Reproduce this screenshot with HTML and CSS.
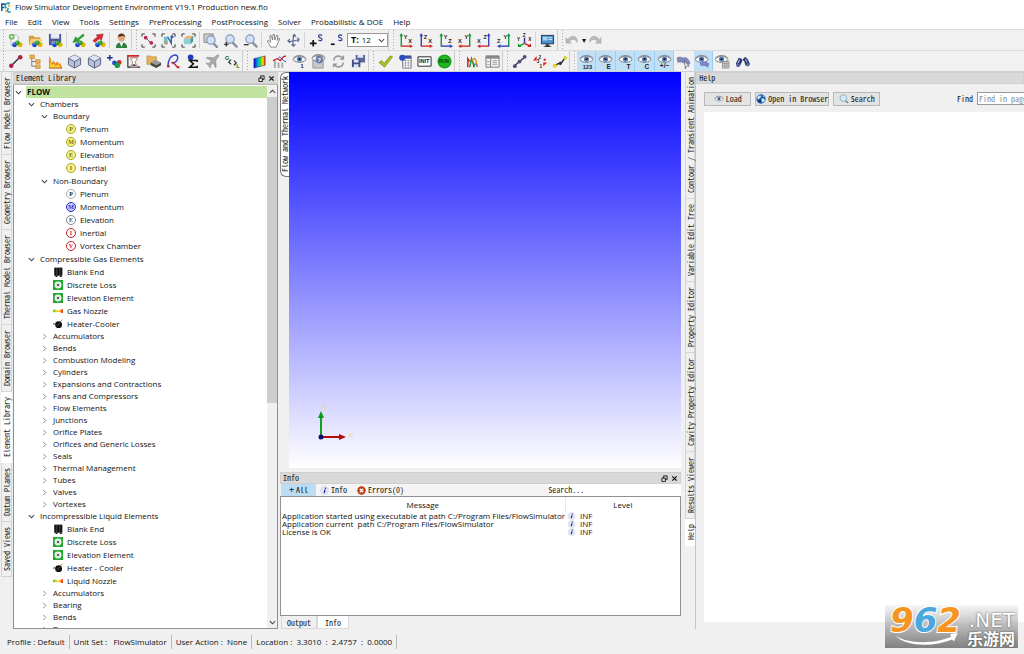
FILE: index.html
```html
<!DOCTYPE html>
<html lang="en">
<head>
<meta charset="utf-8">
<title>Flow Simulator Development Environment</title>
<link rel="stylesheet" href="styles.css">
</head>
<body>
<svg class="defs" aria-hidden="true">
  <defs>
    <linearGradient id="rainbow"><stop offset="0" stop-color="#10c"/><stop offset=".35" stop-color="#0ad"/><stop offset=".6" stop-color="#3d3"/><stop offset=".8" stop-color="#fd0"/><stop offset="1" stop-color="#e20"/></linearGradient>
    <linearGradient id="nozzle"><stop offset="0" stop-color="#7c2"/><stop offset=".5" stop-color="#fd3"/><stop offset="1" stop-color="#e31"/></linearGradient>
  </defs>
  <symbol id="balls" viewBox="0 0 16 16"><circle cx="7" cy="12.500" r="2.600" fill="#1a3fd0"/><circle cx="13" cy="12.500" r="2.600" fill="#e0b400"/><circle cx="10" cy="10.500" r="2.500" fill="#2c9a2c"/><circle cx="6.500" cy="11.500" r=".8" fill="#9bf"/><circle cx="9.500" cy="9.700" r=".7" fill="#bfb"/></symbol>
  <symbol id="i-new" viewBox="0 0 16 16"><path d="M3 2h6l2 2v9H3z" fill="#f4f4f4" stroke="#bbb"/><circle cx="4" cy="4" r="3" fill="#5fae4a"/><path d="M4 2.300v3.400M2.300 4h3.400" stroke="#fff"/><use href="#balls"/></symbol>
  <symbol id="i-open" viewBox="0 0 16 16"><path d="M1 3h5l1 1.500h6V12H1z" fill="#d99b35"/><path d="M3 6h12l-2 7H1z" fill="#f6cf7a"/><use href="#balls"/></symbol>
  <symbol id="i-save" viewBox="0 0 16 16"><path d="M1 1h13v12H1z" fill="#4a5a95"/><path d="M3 1h9v5H3z" fill="#e8ecf6"/><path d="M4 9h7v4H4z" fill="#b9c2dc"/><use href="#balls"/></symbol>
  <symbol id="i-import" viewBox="0 0 16 16"><path d="M13 1 7 6 5 4 2 10l7-1.500L8 7.500 14 3z" fill="#28a52a" stroke="#167018" stroke-width=".5"/><use href="#balls"/></symbol>
  <symbol id="i-export" viewBox="0 0 16 16"><path d="M2 8 7 4 5.500 2 13 1l-2 7-2-2-5 4z" fill="#d92b34" stroke="#8f1a20" stroke-width=".5"/><use href="#balls"/></symbol>
  <symbol id="i-user" viewBox="0 0 16 16"><path d="M2 16c0-5 3-6 6-6s6 1 6 6z" fill="#2f7d3c"/><path d="M6 10h4l-2 5z" fill="#fff"/><circle cx="8" cy="5.500" r="3.500" fill="#e3a878"/><path d="M4 5c0-6 8-6 8 0l-2-2-5 1z" fill="#5a3016"/></symbol>
  <symbol id="frame" viewBox="0 0 16 16"><path d="M1 4V1h3M12 1h3v3M15 12v3h-3M4 15H1v-3" fill="none" stroke="#333"/></symbol>
  <symbol id="i-fit" viewBox="0 0 16 16"><use href="#frame"/><path d="m5 5 6 6" stroke="#a36"/><circle cx="5" cy="5" r="2" fill="#b52360"/><circle cx="11" cy="10.500" r="2" fill="#b52360"/></symbol>
  <symbol id="i-fitm" viewBox="0 0 16 16"><use href="#frame"/><path d="M3 4h4v8H3z" fill="#6fc3c8"/><path d="M7 4l4 7V3" fill="none" stroke="#2a63b8" stroke-width="1.500"/><circle cx="12" cy="4" r="1.500" fill="#2a63b8"/><path d="M4 9h3v3H4z" fill="#d8924a"/></symbol>
  <symbol id="i-fitb" viewBox="0 0 16 16"><use href="#frame"/><path d="M3 6h7v6H3z" fill="#8fd0d6"/><path d="m3 6 3-3h7l-3 3z" fill="#e3b57a"/><path d="m10 6 3-3v6l-3 3z" fill="#4c9b9f"/></symbol>
  <symbol id="lens" viewBox="0 0 16 16"><path d="m10.500 10.500 4 4" stroke="#8890a5" stroke-width="2.500" stroke-linecap="round"/><circle cx="7.500" cy="6.500" r="4.500" fill="#cfe0f7" stroke="#8a94ae" stroke-width="1.200"/></symbol>
  <symbol id="i-zoombox" viewBox="0 0 16 16"><path d="M1 1h10v9H1z" fill="#ccc" stroke="#888"/><use href="#lens" x="1" y="1"/></symbol>
  <symbol id="i-zoomin" viewBox="0 0 16 16"><use href="#lens"/><path d="M1 12h5M3.500 9.500v5" stroke="#222" stroke-width="1.300"/></symbol>
  <symbol id="i-zoomout" viewBox="0 0 16 16"><use href="#lens"/><path d="M1 12.500h5" stroke="#222" stroke-width="1.300"/></symbol>
  <symbol id="i-hand" viewBox="0 0 16 16"><path d="M5 15 1.500 8.500l1.500-.5 2 2L4 3l1.500-.5L7 7.500 7.500 1.500H9l.3 6 2-5 1.500.5-1 5 2-2.500 1 .7L12 12l-1 3z" fill="#fff" stroke="#777" stroke-width=".9" stroke-linejoin="round"/></symbol>
  <symbol id="i-rotate" viewBox="0 0 16 16"><path d="M9 2c-2 4-2 8-1 12M2 8.500c4 1 8 0 12-1.500M7 3.500 9 1.500l1.500 2.500M4 6.500 2 8.500l2.500 2M12 5l2 2-1.500 2.500M6 12l2 2 2-2" fill="none" stroke="#5b6690" stroke-width="1.200"/></symbol>
  <symbol id="i-splus" viewBox="0 0 16 16"><path d="M1 11h7M4.500 7.500v7" stroke="#111" stroke-width="1.800"/><path d="M14 2.500c-4-2-5 2-2 2.600 3 .8 2 4.500-2 2.400" fill="none" stroke="#2b3a98" stroke-width="1.300"/></symbol>
  <symbol id="i-sminus" viewBox="0 0 16 16"><path d="M2 12h4" stroke="#111" stroke-width="1.800"/><path d="M14 2.500c-4-2-5 2-2 2.600 3 .8 2 4.500-2 2.400" fill="none" stroke="#2b3a98" stroke-width="1.300"/></symbol>
  <symbol id="ax-l" viewBox="0 0 16 16"><path d="M3.500 2v12" stroke="currentColor" stroke-width="1.500"/><path d="m3.500 0 2 3.500h-4z" fill="currentColor"/></symbol>
  <symbol id="ax-r" viewBox="0 0 16 16"><path d="M12.500 2v12" stroke="currentColor" stroke-width="1.500"/><path d="m12.500 0 2 3.500h-4z" fill="currentColor"/></symbol>
  <symbol id="ay-l" viewBox="0 0 16 16"><path d="M3 14h10" stroke="currentColor" stroke-width="1.500"/><path d="m16 14-3.500-2v4z" fill="currentColor"/></symbol>
  <symbol id="ay-r" viewBox="0 0 16 16"><path d="M3 14h10" stroke="currentColor" stroke-width="1.500"/><path d="m0 14 3.500-2v4z" fill="currentColor"/></symbol>
  <symbol id="i-iso" viewBox="0 0 16 16"><path d="M8 5v6" stroke="#33a" stroke-width="1.600"/><path d="m8 11-6 3" stroke="#1c9a35" stroke-width="1.600"/><path d="m8 11 6 3" stroke="#c22" stroke-width="1.600"/><path d="M1 11v4h4z" fill="#1c9a35"/><path d="M15 11v4h-4z" fill="#c22"/></symbol>
  <symbol id="i-screen" viewBox="0 0 16 16"><path d="M1 2h14v10H1z" fill="#2e3f55"/><path d="M2 3h12v8H2z" fill="#4b93cf"/><path d="M3 4h5v4H3z" fill="#a9d3f2"/><path d="M9 5h4M9 7h4" stroke="#d6ecff"/><path d="M6 12h4v2h2v1H4v-1h2z" fill="#333"/></symbol>
  <symbol id="i-undo" viewBox="0 0 16 16"><path d="M1 5v6h6L5 9c2-3 6-3 8 1 1-7-6-9-10-3z" fill="#b9b9b9" stroke="#999" stroke-width=".4"/></symbol>
  <symbol id="i-redo" viewBox="0 0 16 16"><path d="M15 5v6H9l2-2c-2-3-6-3-8 1-1-7 6-9 10-3z" fill="#b9b9b9" stroke="#999" stroke-width=".4"/></symbol>

  <symbol id="i-link" viewBox="0 0 16 16"><path d="m3 13 10-10" stroke="#333" stroke-width="1.500"/><circle cx="3.500" cy="12.500" r="2.400" fill="#b01f45"/><circle cx="13" cy="3.500" r="2.400" fill="#b01f45"/></symbol>
  <symbol id="i-tree" viewBox="0 0 16 16"><path d="M4 4v9h5M4 8h5" fill="none" stroke="#777"/><path d="M2 1h5v4H2zM8 6h5v4H8zM8 11.500h5v4H8z" fill="#e9ae4d" stroke="#b97f2b" stroke-width=".5"/></symbol>
  <symbol id="i-flame" viewBox="0 0 16 16"><path d="M1 15V2l2 3 1 5 2-3 2 3 2-2 2 3 1-2 2 6z" fill="#f08a1c"/><path d="M2 15V8l2 4 2-2 2 3 3-2 3 4z" fill="#ffd23c"/><path d="M1 15h14" stroke="#b44b0a"/></symbol>
  <symbol id="i-cube" viewBox="0 0 16 16"><path d="m8 1 6.500 3.500v7L8 15l-6.500-3.500v-7z" fill="#b9c0dc" stroke="#59607f"/><path d="M8 1l6.500 3.500L8 8 1.500 4.500z" fill="#e1e5f3"/><path d="M1.500 4.500 8 8l6.500-3.500M8 8v7" fill="none" stroke="#59607f"/></symbol>
  <symbol id="i-addballs" viewBox="0 0 16 16"><path d="M0 4h6M3 1v6" stroke="#1f2c9c" stroke-width="1.500"/><circle cx="8" cy="9.500" r="2.600" fill="#2047cc"/><circle cx="13" cy="9" r="2.500" fill="#c72a2a"/><circle cx="11" cy="12" r="3" fill="#1c9c3c"/></symbol>
  <symbol id="i-hour" viewBox="0 0 16 16"><path d="M2 1v13h13" fill="none" stroke="#222" stroke-width="1.200"/><path d="M2 2h12" stroke="#c22" stroke-width="1.800"/><path d="M5 4h7c0 3-2 3-2 5s2 2 2 5H5c0-3 2-3 2-5S5 7 5 4z" fill="#fff" stroke="#966"/><path d="M6 13c1-3 4-3 5 0z" fill="#555"/></symbol>
  <symbol id="i-block" viewBox="0 0 16 16"><path d="M1 2h4l1 1h5v8H1z" fill="#e7b35a" stroke="#a4701c" stroke-width=".5"/><path d="m5 9 5-3 6 3-5 3z" fill="#999"/><path d="m5 9 6 3v3l-6-3zM16 9l-5 3v3l5-3z" fill="#444"/></symbol>
  <symbol id="i-curve" viewBox="0 0 16 16"><path d="M2 13C3-2 15-1 12 6c-1 3-4 4-6 3" fill="none" stroke="#2c3fd0" stroke-width="1.500"/><path d="M6 9c3 1 5 3 6 5" fill="none" stroke="#c22" stroke-width="1.500"/><circle cx="2.500" cy="13" r="1.300" fill="#c22"/><circle cx="13" cy="14" r="1.300" fill="#c22"/></symbol>
  <symbol id="i-sigma" viewBox="0 0 16 16"><circle cx="6" cy="3.500" r="3" fill="#1f39b8"/><path d="M13 8.500V7H5l4 3.500L5 14h8v-1.500" fill="none" stroke="#111" stroke-width="1.600"/></symbol>
  <symbol id="i-plane" viewBox="0 0 16 16"><path d="M14.500 1c-2-.5-4 2-5 3L2 3.500 1.500 4.500 7 7l-3 3-2.500-.5v.8l2.200 1.700 1.300 2.500h.8L6.300 12 9 9.500l2 5 1-.7-.5-7.300c1.500-1.500 3.500-4 3-5.500z" fill="#aaa" stroke="#666" stroke-width=".4"/></symbol>
  <symbol id="i-code" viewBox="0 0 16 16"><path d="M6.500 6 4 8.500 6.500 11M9.500 7l2.500 2.500L9.500 12" fill="none" stroke="#222" stroke-width="1.200"/></symbol>
  <symbol id="i-contour" viewBox="0 0 16 16"><path d="m2 5 12-3v10L2 15z" fill="url(#rainbow)" stroke="#118" stroke-width=".5"/></symbol>
  <symbol id="i-chart" viewBox="0 0 16 16"><path d="M2 7h2v8H2zM6 9h2v6H6zM10 9h2v6h-2z" fill="#aaa"/><path d="m1 7 5-2 3 2 3-4 3-1" fill="none" stroke="#c22" stroke-width="1.300"/><path d="M7 4c2-3 4 4 8 4" fill="none" stroke="#23c"/></symbol>
  <symbol id="eye" viewBox="0 0 16 16"><path d="M1 6c4-5 10-5 14 0-4 4-10 4-14 0z" fill="#fff" stroke="#777"/><path d="M1 4.500c4-4 10-4 14 0" fill="none" stroke="#888"/><circle cx="8" cy="5.500" r="2.800" fill="#5d83b8"/><circle cx="8" cy="5.500" r="1.200" fill="#152238"/></symbol>
  <symbol id="i-eyeq" viewBox="0 0 16 16"><path d="M2 7h11v8H2z" fill="#c9c9c9" stroke="#999"/><use href="#eye" y="-1"/><circle cx="9" cy="6" r="4" fill="#6e7ea8"/></symbol>
  <symbol id="i-refresh" viewBox="0 0 16 16"><path d="M3 7c0-5 6-6 9-3M13 9c0 5-6 6-9 3" fill="none" stroke="#999" stroke-width="1.600"/><path d="M14 1v5H9zM2 15v-5h5z" fill="#999"/></symbol>
  <symbol id="i-saves" viewBox="0 0 16 16"><path d="M5 1h10v8H5z" fill="#5b679f"/><path d="M7 1h6v3H7z" fill="#e3e6f4"/><path d="M1 6h9v8H1z" fill="#414d88"/><path d="M3 6h5v3H3zM3 11h5v3H3z" fill="#dfe3f2"/></symbol>
  <symbol id="i-check" viewBox="0 0 16 16"><path d="m1 9 3-2 2.500 3L13 2l2.500 1L7 14z" fill="#a5c520" stroke="#6f8a10" stroke-width=".7"/></symbol>
  <symbol id="i-table" viewBox="0 0 16 16"><path d="M5 2h9v13H5z" fill="#fff" stroke="#556" stroke-width=".8"/><path d="M5 7h9M5 9.500h9M5 12h9M8 6v9M11 6v9" stroke="#889" stroke-width=".6"/><path d="M5 2h9v3H5z" fill="#3f4f98"/><circle cx="4.500" cy="4" r="3.200" fill="#2c4cc0"/></symbol>
  <symbol id="i-box" viewBox="0 0 16 16"><path d="M1 3h14v10H1z" fill="#fff" stroke="#222"/></symbol>
  <symbol id="i-disc" viewBox="0 0 16 16"><circle cx="8" cy="8" r="7.500" fill="#22b822"/><circle cx="8" cy="8" r="6.500" fill="none" stroke="#0c7f12" stroke-width=".6"/></symbol>
  <symbol id="i-peaks" viewBox="0 0 16 16"><path d="M3 14V5l2 3" fill="none" stroke="#c22" stroke-width="1.600"/><path d="M5 14 7 5l3 9" fill="none" stroke="#2c8d2c" stroke-width="1.600"/><path d="M8 7c3-6 4 1 5 7" fill="none" stroke="#e29b1c" stroke-width="1.600"/><path d="M9 14c0-4 2-5 4-1" fill="none" stroke="#33b"/></symbol>
  <symbol id="i-panel" viewBox="0 0 16 16"><path d="M1 2h14v12H1z" fill="#f5f5f5" stroke="#777"/><path d="M1 2h14v3H1z" fill="#888"/><path d="M6 5v9" stroke="#777"/><path d="M2 8h3M2 11h3M8 7h5M8 9h5M8 11h5" stroke="#999"/></symbol>
  <symbol id="i-node" viewBox="0 0 16 16"><path d="M2 13 14 3" stroke="#333" stroke-width="1.400"/><circle cx="3" cy="13" r="2" fill="#4c4c80"/><circle cx="8" cy="8" r="2" fill="#4c4c80"/><circle cx="13.500" cy="3" r="2" fill="#4c4c80"/></symbol>
  <symbol id="i-num" viewBox="0 0 16 16"><path d="M1 7 5 2v5zM12 9h4l-4 4z" fill="#d22"/><circle cx="13.500" cy="6" r="1.300" fill="#d22"/></symbol>
  <symbol id="i-ynode" viewBox="0 0 16 16"><path d="m2 13 5-3 2 1 5-7" fill="none" stroke="#222" stroke-width="1.400"/><circle cx="3" cy="12.500" r="2.200" fill="#d8d81c"/><circle cx="9" cy="9.500" r="1.600" fill="#333"/><circle cx="14" cy="4" r="2" fill="#d8d81c"/></symbol>
  <symbol id="i-surf" viewBox="0 0 16 16"><path d="M1 4c5-2 6 1 8 0s5 2 6 6l-4 3c-1-4-6-5-9-4z" fill="#8087c0" stroke="#62689c" stroke-width=".5"/><path d="m9 7 5 6h-3l-1 3z" fill="#eee" stroke="#444" stroke-width=".6"/></symbol>
  <symbol id="i-eyesurf" viewBox="0 0 16 16"><use href="#eye" x="-1"/><path d="M5 9c4-2 8-1 10 1l-1 5c-2-2-5-3-8-2z" fill="#7d84c4"/></symbol>
  <symbol id="i-eyegrid" viewBox="0 0 16 16"><use href="#eye" x="-1"/><path d="M8 8h7v7H8z" fill="#ddd" stroke="#777" stroke-width=".7"/><path d="M10.300 8v7M12.600 8v7M8 10.300h7M8 12.600h7" stroke="#777" stroke-width=".6"/></symbol>
  <symbol id="i-bino" viewBox="0 0 16 16"><path d="m1 10 3-6 3 1 1 2-3 6-2 1zM8 6l3-3 3 3 2 5-2 2-3-1-1-4z" fill="#26346f"/><path d="m3 10 2-4M11 5l2 4" stroke="#a3afe0" stroke-width="1.200"/><circle cx="13.500" cy="11.500" r="1.800" fill="#5867a8"/><circle cx="3" cy="12" r="1.800" fill="#5867a8"/></symbol>

  <symbol id="i-blank" viewBox="0 0 16 16"><path d="M2 1h13v13H2z" fill="#111"/><path d="M6 1v13M11 1v13" stroke="#777" stroke-width=".8"/><path d="M4 14h3v2H4zM11 14h3v2h-3z" fill="#111"/></symbol>
  <symbol id="i-loss" viewBox="0 0 16 16"><path d="M0 0h16v16H0z" fill="#25a832"/><circle cx="8" cy="8" r="5.500" fill="#fff"/><circle cx="8" cy="8" r="3.400" fill="none" stroke="#9ad6a0"/><circle cx="8" cy="8" r="1.600" fill="#222"/></symbol>
  <symbol id="i-nozzle" viewBox="0 0 16 16"><path d="M0 5.500h4l3 1.500h4l2-2h3v6h-3l-2-1.500H7L4 10H0z" fill="url(#nozzle)"/></symbol>
  <symbol id="i-heater" viewBox="0 0 16 16"><path d="M0 8h5" stroke="#222" stroke-width="1.300"/><path d="m11 5 4-4" stroke="#d83" stroke-width="1.500"/><circle cx="9" cy="9" r="5.500" fill="#111"/><path d="m6 11 6-5" stroke="#875"/></symbol>
  <symbol id="i-down" viewBox="0 0 8 8"><path d="m1 2.500 3 3 3-3" fill="none" stroke="#444" stroke-width="1.200"/></symbol>
  <symbol id="i-up" viewBox="0 0 8 8"><path d="m1 5.500 3-3 3 3" fill="none" stroke="#444" stroke-width="1.200"/></symbol>
  <symbol id="i-right" viewBox="0 0 8 8"><path d="m2.500 1 3 3-3 3" fill="none" stroke="#888" stroke-width="1.100"/></symbol>
  <symbol id="i-float" viewBox="0 0 8 8"><path d="M3 1h4v4H3z" fill="none" stroke="#111"/><path d="M1 3.500h4v4H1z" fill="#ddd" stroke="#111"/></symbol>
  <symbol id="i-close" viewBox="0 0 8 8"><path d="m1.500 1.500 5 5M6.500 1.500l-5 5" stroke="#111" stroke-width="1.400"/></symbol>
  <symbol id="i-info" viewBox="0 0 16 16"><circle cx="8" cy="8" r="7" fill="#e4e6f4" stroke="#d0d2de"/><path d="M10 3 9.600 5M9 6.500l-1.600 6" stroke="#2330b0" stroke-width="2.400"/></symbol>
  <symbol id="i-err" viewBox="0 0 16 16"><circle cx="8" cy="8" r="7.500" fill="#c23a10"/><path d="m5 5 6 6M11 5l-6 6" stroke="#fff" stroke-width="2.400"/></symbol>
  <symbol id="i-globe" viewBox="0 0 16 16"><circle cx="8" cy="8" r="7.500" fill="#1d62b8"/><path d="M2 5c3-4 6-3 6-1S5 6 5 8 2 8 2 5zM9 8c3-2 5 0 5 2s-3 4-4 3-2-4-1-5zM11 2l3 3-3-1z" fill="#d8e8f4"/><circle cx="6" cy="11" r="2.500" fill="#0c2f7a"/></symbol>
  <symbol id="i-find" viewBox="0 0 16 16"><path d="m10 10 4.500 4.500" stroke="#68a" stroke-width="2.500"/><circle cx="7" cy="6.500" r="5.500" fill="#cfe7f8" stroke="#79a"/></symbol>
</svg>

<header class="titlebar">
  <svg class="logo" viewBox="0 0 16 16" aria-hidden="true"><path d="M6 3H1v10M1 8h4" fill="none" stroke="#245c8c" stroke-width="2.500"/><path d="M13 2c-6-2-9 4-5 7M14 14c-5 2-6-2-3-5" fill="none" stroke="#2a9bc8" stroke-width="2.500"/><path d="m10 3 4 2-3 3zM7 11l3 3-4 1z" fill="#f0a020"/></svg>
  <span>Flow Simulator Development Environment V19.1 Production new.flo</span>
</header>
<nav class="menubar" aria-label="Main menu">
  <button>File</button><button>Edit</button><button>View</button><button>Tools</button><button>Settings</button><button>PreProcessing</button><button>PostProcessing</button><button>Solver</button><button>Probabilistic &amp; DOE</button><button>Help</button>
</nav>

<div class="toolbar">
  <i class="grip first"></i>
  <div class="group g3"><button aria-label="New"><svg><use href="#i-new"/></svg></button><button aria-label="Open"><svg><use href="#i-open"/></svg></button><button aria-label="Save"><svg><use href="#i-save"/></svg></button></div><i class="sep"></i>
  <div class="group g2"><button aria-label="Import"><svg><use href="#i-import"/></svg></button><button aria-label="Export"><svg><use href="#i-export"/></svg></button></div><i class="sep"></i>
  <div class="group g1"><button aria-label="User"><svg><use href="#i-user"/></svg></button></div>
  <i class="grip"></i>
  <div class="group g3"><button aria-label="Fit network"><svg><use href="#i-fit"/></svg></button><button aria-label="Fit model"><svg><use href="#i-fitm"/></svg></button><button aria-label="Fit geometry"><svg><use href="#i-fitb"/></svg></button></div><i class="sep"></i>
  <div class="group g3"><button aria-label="Zoom window"><svg><use href="#i-zoombox"/></svg></button><button aria-label="Zoom in"><svg><use href="#i-zoomin"/></svg></button><button aria-label="Zoom out"><svg><use href="#i-zoomout"/></svg></button></div><i class="sep"></i>
  <div class="group g2"><button aria-label="Pan"><svg><use href="#i-hand"/></svg></button><button aria-label="Rotate"><svg><use href="#i-rotate"/></svg></button></div><i class="sep"></i>
  <div class="group g2"><button aria-label="Larger symbols"><svg><use href="#i-splus"/></svg></button><button aria-label="Smaller symbols"><svg><use href="#i-sminus"/></svg></button></div>
  <label class="sizer"><b>T:</b><select aria-label="Text size"><option>12</option></select><svg><use href="#i-down"/></svg></label>
  <i class="grip"></i>
  <div class="group g7">
    <button aria-label="XY view"><svg viewBox="0 0 16 16"><use href="#ax-l" class="green"/><use href="#ay-l" class="red"/><text x="6" y="6" class="t6">Y</text><text x="11" y="11" class="t6">X</text></svg></button>
    <button aria-label="XZ view"><svg viewBox="0 0 16 16"><use href="#ax-l" class="blue"/><use href="#ay-l" class="red"/><text x="6" y="6" class="t6">Z</text><text x="11" y="11" class="t6">X</text></svg></button>
    <button aria-label="ZY view"><svg viewBox="0 0 16 16"><use href="#ax-l" class="green"/><use href="#ay-l" class="blue"/><text x="6" y="6" class="t6">Y</text><text x="11" y="11" class="t6">Z</text></svg></button>
    <button aria-label="Reverse XY view"><svg viewBox="0 0 16 16"><use href="#ax-r" class="green"/><use href="#ay-r" class="red"/><text x="7" y="6" class="t6">Y</text><text x="0" y="11" class="t6">X</text></svg></button>
    <button aria-label="Reverse XZ view"><svg viewBox="0 0 16 16"><use href="#ax-r" class="blue"/><use href="#ay-r" class="red"/><text x="7" y="6" class="t6">Z</text><text x="0" y="11" class="t6">X</text></svg></button>
    <button aria-label="Reverse ZY view"><svg viewBox="0 0 16 16"><use href="#ax-r" class="green"/><use href="#ay-r" class="blue"/><text x="7" y="6" class="t6">Y</text><text x="0" y="11" class="t6">Z</text></svg></button>
    <button aria-label="Isometric view"><svg viewBox="0 0 16 16"><use href="#i-iso"/><text x="6" y="4" class="t5">Z</text><text x="0" y="8" class="t5">Y</text><text x="12" y="8" class="t5">X</text></svg></button>
  </div><i class="sep"></i>
  <div class="group g1"><button aria-label="Screen"><svg><use href="#i-screen"/></svg></button></div>
  <i class="grip"></i>
  <div class="group"><button aria-label="Undo"><svg><use href="#i-undo"/></svg></button><button class="caret" aria-label="Undo history">▾</button><button aria-label="Redo"><svg><use href="#i-redo"/></svg></button></div>
</div>

<div class="toolbar">
  <i class="grip first"></i>
  <div class="group g12"><button aria-label="Link"><svg><use href="#i-link"/></svg></button><button aria-label="Hierarchy"><svg><use href="#i-tree"/></svg></button><button aria-label="Thermal"><svg><use href="#i-flame"/></svg></button><button aria-label="Cube"><svg><use href="#i-cube"/></svg></button><button aria-label="Solid"><svg><use href="#i-cube"/></svg></button><button aria-label="Add chamber"><svg><use href="#i-addballs"/></svg></button><button aria-label="Transient"><svg><use href="#i-hour"/></svg></button><button aria-label="Assembly"><svg><use href="#i-block"/></svg></button><button aria-label="Curves"><svg><use href="#i-curve"/></svg></button><button aria-label="Sum"><svg><use href="#i-sigma"/></svg></button><button aria-label="Mission"><svg><use href="#i-plane"/></svg></button><button aria-label="Gas to liquid"><svg viewBox="0 0 16 16"><use href="#i-code"/><text x="0" y="6" class="t6 green">G</text><text x="12" y="15" class="t6 green">L</text></svg></button></div>
  <i class="grip"></i>
  <div class="group g6"><button aria-label="Contour"><svg><use href="#i-contour"/></svg></button><button aria-label="Charts"><svg><use href="#i-chart"/></svg></button><button aria-label="Show one"><svg viewBox="0 0 16 16"><use href="#eye"/><text x="9" y="15" class="t6">1</text></svg></button><button aria-label="Query"><svg viewBox="0 0 16 16"><use href="#i-eyeq"/><text x="7" y="8" class="t6 white">?</text></svg></button><button aria-label="Refresh"><svg><use href="#i-refresh"/></svg></button><button aria-label="Save views"><svg><use href="#i-saves"/></svg></button></div>
  <i class="grip"></i>
  <div class="group g4"><button aria-label="Check"><svg><use href="#i-check"/></svg></button><button aria-label="Table"><svg><use href="#i-table"/></svg></button><button aria-label="Initialise"><svg viewBox="0 0 16 16"><use href="#i-box"/><text x="2" y="10" class="t6">INIT</text></svg></button><button aria-label="Run"><svg viewBox="0 0 16 16"><use href="#i-disc"/><text x="2" y="10" class="t5 dark">RUN</text></svg></button></div>
  <i class="grip"></i>
  <div class="group g2"><button aria-label="Plot"><svg><use href="#i-peaks"/></svg></button><button aria-label="Panel"><svg><use href="#i-panel"/></svg></button></div>
  <i class="grip"></i>
  <div class="group g3"><button aria-label="Nodes"><svg><use href="#i-node"/></svg></button><button aria-label="Renumber"><svg viewBox="0 0 16 16"><use href="#i-num"/><text x="7" y="5" class="t5">2</text><text x="5" y="10" class="t5">3</text><text x="8" y="15" class="t5">1</text></svg></button><button aria-label="Elements"><svg><use href="#i-ynode"/></svg></button></div>
  <i class="grip"></i>
  <div class="group g9">
    <button class="on" aria-label="Show numbers"><svg viewBox="0 0 16 16"><use href="#eye"/><text x="4" y="16" class="t6">123</text></svg></button>
    <button class="on" aria-label="Show elements"><svg viewBox="0 0 16 16"><use href="#eye"/><text x="9" y="16" class="t7">E</text></svg></button>
    <button class="on" aria-label="Show thermal"><svg viewBox="0 0 16 16"><use href="#eye"/><text x="9" y="16" class="t7">T</text></svg></button>
    <button class="on" aria-label="Show chambers"><svg viewBox="0 0 16 16"><use href="#eye"/><text x="8" y="16" class="t7">C</text></svg></button>
    <button class="on" aria-label="Show signs"><svg viewBox="0 0 16 16"><use href="#eye"/><text x="3" y="15" class="t7">+/−</text></svg></button>
    <button aria-label="Select surface"><svg><use href="#i-surf"/></svg></button><button class="on" aria-label="Show surface"><svg><use href="#i-eyesurf"/></svg></button><button aria-label="Show grid"><svg><use href="#i-eyegrid"/></svg></button><button aria-label="Find"><svg><use href="#i-bino"/></svg></button>
  </div>
</div>

<main class="work">
  <div class="vtabs left">
    <button>Flow Model Browser</button><button>Geometry Browser</button><button>Thermal Model Browser</button><button>Domain Browser</button><button class="active">Element Library</button><button>Datum Planes</button><button>Saved Views</button>
  </div>

  <section class="library">
    <h2 class="dockhead"><span>Element Library</span><button aria-label="Float"><svg><use href="#i-float"/></svg></button><button aria-label="Close"><svg><use href="#i-close"/></svg></button></h2>
    <div class="treebox">
      <ul class="tree">
        <li><div class="row root"><svg class="tg"><use href="#i-down"/></svg><b>FLOW</b></div>
        <ul>
          <li><div class="row"><svg class="tg"><use href="#i-down"/></svg>Chambers</div>
          <ul>
            <li><div class="row"><svg class="tg"><use href="#i-down"/></svg>Boundary</div>
              <ul class="leaves inner">
                <li class="row"><i class="badge yel">P</i>Plenum</li><li class="row"><i class="badge yel">M</i>Momentum</li><li class="row"><i class="badge yel">E</i>Elevation</li><li class="row"><i class="badge yel">I</i>Inertial</li>
              </ul></li>
            <li><div class="row"><svg class="tg"><use href="#i-down"/></svg>Non-Boundary</div>
              <ul class="leaves inner">
                <li class="row"><i class="badge blk">P</i>Plenum</li><li class="row"><i class="badge blu">M</i>Momentum</li><li class="row"><i class="badge gry">E</i>Elevation</li><li class="row"><i class="badge rd">I</i>Inertial</li><li class="row"><i class="badge rd">V</i>Vortex Chamber</li>
              </ul></li>
          </ul></li>
          <li><div class="row"><svg class="tg"><use href="#i-down"/></svg>Compressible Gas Elements</div>
            <ul class="leaves">
              <li class="row"><svg class="pic"><use href="#i-blank"/></svg>Blank End</li><li class="row"><svg class="pic"><use href="#i-loss"/></svg>Discrete Loss</li><li class="row"><svg class="pic"><use href="#i-loss"/></svg>Elevation Element</li><li class="row"><svg class="pic"><use href="#i-nozzle"/></svg>Gas Nozzle</li><li class="row"><svg class="pic"><use href="#i-heater"/></svg>Heater-Cooler</li>
            </ul>
            <ul>
              <li class="row"><svg class="tg"><use href="#i-right"/></svg>Accumulators</li><li class="row"><svg class="tg"><use href="#i-right"/></svg>Bends</li><li class="row"><svg class="tg"><use href="#i-right"/></svg>Combustion Modeling</li><li class="row"><svg class="tg"><use href="#i-right"/></svg>Cylinders</li><li class="row"><svg class="tg"><use href="#i-right"/></svg>Expansions and Contractions</li><li class="row"><svg class="tg"><use href="#i-right"/></svg>Fans and Compressors</li><li class="row"><svg class="tg"><use href="#i-right"/></svg>Flow Elements</li><li class="row"><svg class="tg"><use href="#i-right"/></svg>Junctions</li><li class="row"><svg class="tg"><use href="#i-right"/></svg>Orifice Plates</li><li class="row"><svg class="tg"><use href="#i-right"/></svg>Orifices and Generic Losses</li><li class="row"><svg class="tg"><use href="#i-right"/></svg>Seals</li><li class="row"><svg class="tg"><use href="#i-right"/></svg>Thermal Management</li><li class="row"><svg class="tg"><use href="#i-right"/></svg>Tubes</li><li class="row"><svg class="tg"><use href="#i-right"/></svg>Valves</li><li class="row"><svg class="tg"><use href="#i-right"/></svg>Vortexes</li>
            </ul></li>
          <li><div class="row"><svg class="tg"><use href="#i-down"/></svg>Incompressible Liquid Elements</div>
            <ul class="leaves">
              <li class="row"><svg class="pic"><use href="#i-blank"/></svg>Blank End</li><li class="row"><svg class="pic"><use href="#i-loss"/></svg>Discrete Loss</li><li class="row"><svg class="pic"><use href="#i-loss"/></svg>Elevation Element</li><li class="row"><svg class="pic"><use href="#i-heater"/></svg>Heater - Cooler</li><li class="row"><svg class="pic"><use href="#i-nozzle"/></svg>Liquid Nozzle</li>
            </ul>
            <ul>
              <li class="row"><svg class="tg"><use href="#i-right"/></svg>Accumulators</li><li class="row"><svg class="tg"><use href="#i-right"/></svg>Bearing</li><li class="row"><svg class="tg"><use href="#i-right"/></svg>Bends</li><li class="row"><svg class="tg"><use href="#i-right"/></svg>Bosses</li>
            </ul></li>
        </ul></li>
      </ul>
      <div class="scroll"><button aria-label="Scroll up"><svg><use href="#i-up"/></svg></button><div class="track"><div class="thumb"></div></div><button aria-label="Scroll down"><svg><use href="#i-down"/></svg></button></div>
    </div>
  </section>

  <section class="center">
    <div class="stage">
      <div class="scenetab"><button>Flow and Thermal Network</button></div>
      <div class="canvas">
        <svg class="axes" viewBox="0 0 40 40" aria-label="Axes"><path d="M6 34V14" stroke="#10a020" stroke-width="2"/><path d="m6 8 3 7H3z" fill="#0b9a1b"/><path d="M6 34h18" stroke="#b00c0c" stroke-width="2"/><path d="m31 34-7-3v6z" fill="#b00c0c"/><circle cx="6" cy="34" r="2.500" fill="#0b0b78"/><text x="7" y="7" class="axt">Y</text><text x="33" y="35" class="axt">X</text></svg>
      </div>
    </div>
    <section class="info">
      <h2 class="dockhead"><span>Info</span><button aria-label="Float"><svg><use href="#i-float"/></svg></button><button aria-label="Close"><svg><use href="#i-close"/></svg></button></h2>
      <div class="filters"><button class="on"><b class="plus">+</b>All</button><button><svg><use href="#i-info"/></svg>Info</button><button><svg><use href="#i-err"/></svg>Errors(0)</button><input type="text" placeholder="Search..." aria-label="Search messages"></div>
      <div class="log">
        <table>
          <thead><tr><th class="msg">Message</th><th>Level</th></tr></thead>
          <tbody>
            <tr><td>Application started using executable at path C:/Program Files/FlowSimulator</td><td class="lvl"><svg><use href="#i-info"/></svg>INF</td></tr>
            <tr><td>Application current&nbsp; path C:/Program Files/FlowSimulator</td><td class="lvl"><svg><use href="#i-info"/></svg>INF</td></tr>
            <tr><td>License is OK</td><td class="lvl"><svg><use href="#i-info"/></svg>INF</td></tr>
          </tbody>
        </table>
      </div>
      <div class="btabs"><button>Output</button><button class="active">Info</button></div>
    </section>
  </section>

  <div class="vtabs right">
    <button>Contour / Transient Animation</button><button>Variable Edit Tree</button><button>Property Editor</button><button>Cavity Property Editor</button><button>Results Viewer</button><button class="active">Help</button>
  </div>

  <section class="help">
    <h2 class="dockhead"><span>Help</span></h2>
    <div class="helpbar">
      <button><svg viewBox="0 -2 16 16"><use href="#eye"/></svg>Load</button><button><svg><use href="#i-globe"/></svg>Open in Browser</button><button><svg><use href="#i-find"/></svg>Search</button>
      <label for="find">Find</label><input id="find" type="text" placeholder="Find in page">
    </div>
    <div class="page"></div>
  </section>
</main>

<footer class="status"><span>Profile : Default</span><span>Unit Set :&nbsp;&nbsp; FlowSimulator</span><span>User Action :&nbsp; None</span><span>Location :&nbsp; 3.3010&nbsp; :&nbsp; 2.4757&nbsp; :&nbsp; 0.0000</span></footer>

<div class="mark">
  <div class="digits"><span class="or">9</span><span class="bl">6</span><span class="or">2</span></div>
  <div class="names"><span class="net">.NET</span><span class="cn">乐游网</span></div>
  <svg viewBox="0 0 70 14" aria-hidden="true"><path d="M1 3c14 9 42 9 60 1l-1-3 8-1-4 9-2-2C40 16 12 14 1 3z" fill="#fff"/></svg>
</div>
</body>
</html>
```
FILE: styles.css
```css
* { box-sizing: border-box; }
html { height: 100%; }
body {
  --ui: "Open Sans", "Noto Sans", sans-serif;
  --mono: "Noto Sans Mono CJK SC", "Liberation Mono", monospace;
  display: flex; flex-direction: column; height: 100%; margin: 0; overflow: hidden;
  background: #f0f0f0; color: #111; font: 8px/12px var(--ui);
}
button, input, select { margin: 0; padding: 0; border: 0; border-radius: 0; background: none; color: inherit; font: inherit; white-space: nowrap; }
ul { list-style: none; margin: 0; padding: 0; }
svg { display: block; flex: none; }
.defs { position: absolute; width: 0; height: 0; }
.t5, .t6, .t7 { font-family: "Liberation Sans", sans-serif; font-weight: bold; fill: #222; }
.t5 { font-size: 5px; }
.t6 { font-size: 6px; }
.t7 { font-size: 7px; }
text.green { fill: #176b25; }
text.white { fill: #fff; }
text.dark { fill: #043a08; }
use.green { color: #12993a; }
use.red { color: #cc3333; }
use.blue { color: #3344bb; }

.titlebar { display: flex; align-items: center; gap: 3px; height: 14px; padding-left: 1px; background: #fff; }
.logo { width: 11px; height: 11px; }
.menubar { display: flex; gap: 10px; height: 15px; padding-left: 5px; background: #fff; }
.menubar button { line-height: 15px; }

.toolbar { display: flex; align-items: center; height: 21px; border-top: 1px solid #dcdcdc; background: #f1f1f1; }
.group { display: flex; height: 20px; }
.group button { flex: 1 1 20px; display: flex; align-items: center; justify-content: center; }
.group svg { width: 15px; height: 15px; overflow: visible; }
.group .on { background: #bfe0f7; border-right: 1px solid #9dcdf0; }
.group .caret { flex: 0 0 7px; font-size: 8px; }
.g1 { width: 20px; }
.g2 { width: 40px; }
.g3 { width: 59px; }
.g4 { width: 78px; }
.g6 { width: 118px; }
.g7 { width: 138px; }
.g9 { width: 175px; }
.g12 { width: 236px; }
.sep { width: 1px; height: 16px; margin: 0 1px; background: #d4d4d4; }
.grip { width: 8px; height: 20px; border-left: 1px solid #ccc; background: radial-gradient(circle, #aaa 0 1px, transparent 1px) 3px 2px / 3px 3px repeat-y; }
.grip.first { width: 6px; border-left: 0; background-position: 2px 2px; }
.sizer { display: flex; align-items: center; gap: 3px; width: 41px; height: 14px; margin-left: 1px; padding: 0 2px 0 3px; border: 1px solid #999; background: #fff; }
.sizer b { font-size: 9px; }
.sizer select { flex: 1; min-width: 0; appearance: none; }
.sizer svg { width: 7px; height: 7px; }

.work { flex: 1; display: flex; min-height: 0; border-top: 1px solid #d0d0d0; }
.vtabs { flex: none; display: flex; flex-direction: column; width: 11px; font: 8px/9px var(--mono); }
.vtabs button { writing-mode: vertical-rl; transform: rotate(180deg); padding: 5px 0; border: 1px solid #d4d4d4; border-bottom-width: 0; text-align: center; }
.vtabs .active { background: #fff; border-color: #fff; }
.vtabs.left { margin-left: 1px; }

.library { flex: none; display: flex; flex-direction: column; width: 265px; min-height: 0; margin-left: 1px; }
.dockhead { flex: none; display: flex; align-items: center; gap: 3px; height: 12px; margin: 0; padding: 0 2px; background: #d9d9d9; border: 1px solid #cfcfcf; font: 8px/10px var(--mono); }
.dockhead span { flex: 1; }
.dockhead svg { width: 7px; height: 7px; }
.treebox { flex: 1; display: flex; min-height: 0; border: 1px solid #8f8f98; border-top-color: #bbb; background: #fff; }
.tree { flex: 1; overflow: hidden; padding-top: 1px; }
.row { display: flex; align-items: center; height: 12px; white-space: nowrap; }
.root { background: linear-gradient(90deg, #fff 12px, #c1e3a0 12px); }
.tree ul { padding-left: 13px; }
.tree ul.leaves { padding-left: 25px; }
.tree ul.inner { padding-bottom: 1px; }
.leaves .row { height: 13px; }
.tg { width: 7px; height: 7px; margin: 0 5px 0 1px; }
.pic { width: 10px; height: 10px; margin: 0 4px 0 1px; }
.badge { flex: none; width: 10px; height: 10px; margin: 0 4px 0 1px; border: 1px solid; border-radius: 50%; font: bold 6px/8px "Liberation Serif", serif; text-align: center; }
.yel { color: #77770a; border-color: #a5a520; background: #f3f38a; }
.blk { color: #222; border-color: #aaa; }
.gry { color: #555; border-color: #888; }
.blu { color: #1a2fd0; border-color: #1a2fd0; background: #c9d0ff; }
.rd { color: #c41c2c; border-color: #c41c2c; }
.scroll { flex: none; display: flex; flex-direction: column; width: 10px; background: #f0f0f0; }
.scroll button { height: 12px; display: flex; align-items: center; justify-content: center; }
.scroll svg { width: 7px; height: 7px; }
.track { flex: 1; }
.thumb { height: 59%; background: #cdcdcd; }

.center { flex: 1; display: flex; flex-direction: column; min-width: 0; margin-left: 2px; }
.stage { flex: 1; display: flex; min-height: 0; }
.scenetab { flex: none; width: 9px; }
.scenetab button { writing-mode: vertical-rl; transform: rotate(180deg); width: 9px; height: 105px; border: 1px solid #777; border-left: 0; border-radius: 0 6px 6px 0; background: #fff; font: 8px/8px var(--mono); text-align: center; }
.canvas { flex: 1; display: flex; align-items: flex-end; background: linear-gradient(#0000ff, #ffffff); }
.axes { width: 40px; height: 40px; margin: 0 0 25px 26px; }
.axt { font: 8px "Liberation Sans", sans-serif; fill: #ecd68c; }
.info { flex: none; display: flex; flex-direction: column; height: 157px; margin-top: 4px; }
.filters { flex: none; display: flex; height: 12px; margin-left: 1px; font: 8px/12px var(--mono); background: #f4f4f4; }
.filters button { display: flex; align-items: center; gap: 2px; margin-right: 10px; }
.filters .on { width: 35px; margin-right: 4px; justify-content: center; background: #bcdcf4; }
.filters svg { width: 9px; height: 9px; }
.plus { color: #246; font: bold 9px/10px var(--ui); }
.filters input { width: 133px; margin-left: auto; background: #fff; }
.filters input::placeholder { color: #222; opacity: 1; }
.log { flex: 1; border: 1px solid #8f8f98; background: #fff; }
.log table { width: 100%; border-collapse: collapse; table-layout: fixed; line-height: 8px; }
.log th { height: 15px; padding: 0; font-weight: normal; }
.log td { height: 8px; padding: 0 0 0 1px; white-space: nowrap; }
.msg { width: 284px; border-right: 1px solid #e8e8e8; }
.log .lvl { padding-left: 2px; }
.lvl svg { display: inline-block; width: 9px; height: 8px; margin-right: 4px; vertical-align: top; }
.btabs { flex: none; display: flex; height: 13px; padding-left: 1px; font: 8px/11px var(--mono); }
.btabs button { padding: 0 5px; border: 1px solid #d9d9d9; border-top: 0; }
.btabs .active { padding: 0 7px; background: #fff; }

.vtabs.right { margin-left: 4px; border-right: 1px solid #c4c4c4; }
.help { flex: none; display: flex; flex-direction: column; width: 32%; overflow: hidden; }
.helpbar { flex: none; display: flex; align-items: center; gap: 4px; height: 27px; padding: 0 0 0 8px; margin-top: 1px; font: 8px/12px var(--mono); }
.helpbar button { flex: none; display: flex; align-items: center; justify-content: center; gap: 2px; min-width: 47px; height: 14px; padding: 0; border: 1px solid #b8b8b8; background: #e3e3e3; }
.helpbar svg { width: 10px; height: 10px; }
.helpbar label { margin-left: auto; }
.helpbar input { flex: none; width: 70px; height: 13px; margin-right: -23px; border: 1px solid #999; background: #fff; padding-left: 1px; }
.helpbar input::placeholder { color: #888; opacity: 1; }
.page { flex: 1; margin: 0 0 7px 8px; background: #fff; }

.status { flex: none; display: flex; align-items: center; height: 25px; padding-left: 7px; }
.status span { padding-right: 4px; margin-right: 4px; line-height: 14px; border-right: 1px solid #bbb; }

.mark { position: absolute; right: 6px; bottom: 6px; width: 133px; height: 43px; background: linear-gradient(rgba(240, 240, 240, .6), #808080); }
.digits { position: absolute; left: 5px; top: -3px; display: flex; font: italic bold 34px/36px "DejaVu Sans", sans-serif; -webkit-text-stroke: 2px #fff; paint-order: stroke fill; }
.digits .or { color: #f5951f; }
.digits .bl { color: #4ba7dc; }
.names { position: absolute; right: 3px; top: 5px; display: flex; flex-direction: column; align-items: flex-end; color: #fff; text-shadow: 0 0 2px #444; }
.net { font: 20px/20px "DejaVu Sans", sans-serif; }
.cn { font: bold 16px/17px "Noto Sans CJK SC", sans-serif; }
.mark svg { position: absolute; left: 6px; bottom: 2px; width: 72px; height: 13px; }
```
